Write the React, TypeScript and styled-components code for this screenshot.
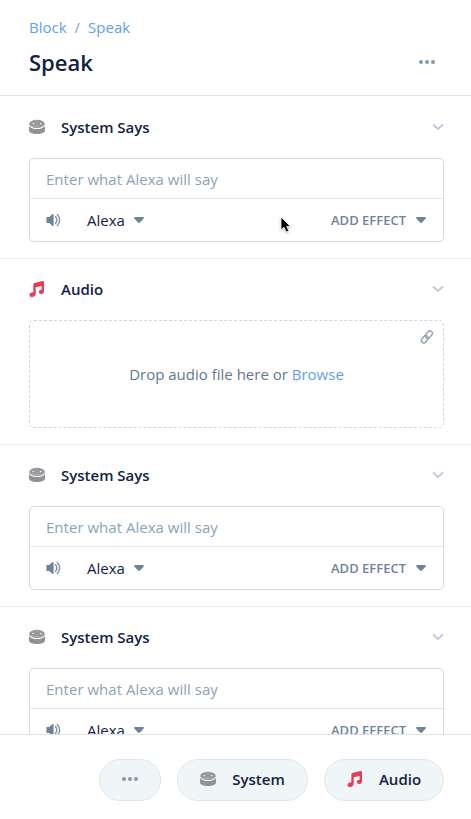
import React from "react";
import styled, { createGlobalStyle } from "styled-components";

const GlobalStyle = createGlobalStyle`
  *, *::before, *::after { box-sizing: border-box; }
  body { margin: 0; background: #fff; overflow: hidden; }
  button { font: inherit; color: inherit; }
`;

const Editor = styled.div`
  position: relative;
  display: flex;
  flex-direction: column;
  height: 819px;
  width: 100%;
  background: #fff;
  color: #132144;
  font-family: "Open Sans", sans-serif;
  font-size: 15px;
  line-height: 20px;
`;

const Header = styled.header`
  flex: none;
  height: 96px;
  padding: 17px 29px 0;
  border-bottom: 1px solid #dfe3e6;
`;

const Breadcrumb = styled.nav`
  display: flex;
  gap: 8px;
  color: #8da2b5;
`;

const Link = styled.a`
  color: #629fe6;
  text-decoration: none;
`;

const TitleRow = styled.div`
  display: flex;
  align-items: center;
  justify-content: space-between;
  height: 30px;
  margin-top: 10px;
  padding-right: 7px;
`;

const Title = styled.h1`
  margin: 0;
  font-size: 22px;
  line-height: 30px;
  font-weight: 600;
`;

const IconButton = styled.button`
  display: flex;
  padding: 0;
  border: 0;
  background: none;
`;

const Sections = styled.main`
  flex: 1;
  min-height: 0;
  padding-top: 1px;
  overflow: hidden;
`;

const Section = styled.section`
  padding: 20px 27px 16px 29px;
  border-bottom: 1px solid #e9ecee;
`;

const SectionHead = styled.div`
  display: flex;
  align-items: center;
  height: 20px;
  margin-bottom: 21px;
`;

const SectionTitle = styled.h2`
  flex: 1;
  margin: 0 0 0 16px;
  font-size: 15px;
  line-height: 20px;
  font-weight: 600;
`;

const SpeechBox = styled.div`
  height: 84px;
  border: 1px solid #d2dae2;
  border-radius: 5px;
  box-shadow: 0 0 2px rgba(17, 49, 96, 0.06);
`;

const Prompt = styled.div`
  height: 39px;
  padding: 10px 16px 0;
  color: #8da2b5;
  letter-spacing: 0.02px;
`;

const Toolbar = styled.div`
  display: flex;
  align-items: center;
  height: 43px;
  padding: 0 17px 1px 16px;
  border-top: 1px solid #e5e9ec;
`;

const Picker = styled.button<{ $effect?: boolean }>`
  display: flex;
  align-items: center;
  gap: ${(p) => (p.$effect ? 10 : 9)}px;
  margin-left: ${(p) => (p.$effect ? "auto" : "25px")};
  padding: 0;
  border: 0;
  background: none;
  color: ${(p) => (p.$effect ? "#6e849a" : "#132144")};
  font-size: ${(p) => (p.$effect ? 13 : 15)}px;
  font-weight: ${(p) => (p.$effect ? 600 : 400)};
  line-height: 20px;
`;

const DropZone = styled.div`
  position: relative;
  display: flex;
  align-items: center;
  justify-content: center;
  height: 108px;
  border: 1px dashed #d2d6d9;
  border-radius: 5px;
  color: #62778c;
  white-space: pre;
`;

const LinkBadge = styled.span`
  position: absolute;
  top: 9px;
  right: 9px;
  display: flex;
`;

const Footer = styled.footer`
  flex: none;
  display: flex;
  justify-content: flex-end;
  gap: 16px;
  height: 85px;
  padding: 24px 27px 0;
  border-top: 1px solid #dfe3e6;
  background: #fff;
`;

const Pill = styled.button<{ $width: number }>`
  display: flex;
  align-items: center;
  justify-content: center;
  gap: 16px;
  width: ${(p) => p.$width}px;
  height: 42px;
  padding: 0 0 2px;
  border: 1px solid #dfe5ed;
  border-radius: 21px;
  background: #f0f6f8;
  font-weight: 600;
`;

const Pointer = styled.svg`
  position: absolute;
  left: 280px;
  top: 216px;
  filter: drop-shadow(0 1px 1px rgba(0, 0, 0, 0.25));
`;

const Dots = () => (
  <svg width="16" height="4" viewBox="0 0 16 4" fill="#8299ae">
    <circle cx="2" cy="2" r="2" />
    <circle cx="8" cy="2" r="2" />
    <circle cx="14" cy="2" r="2" />
  </svg>
);

const SpeakerPuck = () => (
  <svg width="16" height="16" viewBox="0 0 16 16">
    <path d="M0 7C1.3 9.1 4.3 10.1 8 10.1S14.7 9.1 16 7V11.5C16 13.5 12.6 15 8 15S0 13.5 0 11.5Z" fill="#919295" />
    <ellipse cx="8" cy="4.9" rx="7.8" ry="4.2" fill="#97989b" />
    <path d="M2.3 6.1C4 8.1 12 8.1 13.7 6.1" fill="none" stroke="#b9babd" strokeWidth=".6" />
    <ellipse cx="4.3" cy="4.6" rx=".9" ry=".6" fill="#fff" />
    <ellipse cx="11.7" cy="4.6" rx=".9" ry=".6" fill="#fff" />
    <path d="M6.5 2.1H9.5M7 6.1H9" stroke="#b9babd" strokeWidth=".5" />
  </svg>
);

const Note = () => (
  <svg width="16" height="16" viewBox="0 0 16 16" fill="#e2405a">
    <path d="M4.3 3.4Q4.4 2.3 5.4 2L13.4 .1Q15 -.2 15 1.2V10.3C15 12.1 14 13.1 12.3 13.1C10.8 13.1 9.8 12.3 9.8 11.1C9.8 9.5 11.1 8.8 12.6 8.8V5L6.7 6.3V12.8C6.7 14.8 5.1 16 3.2 16H2.5C1.2 16 .5 15.2 .5 14C.5 12.2 2 11.2 4.3 11.3Z" />
  </svg>
);

const Chevron = () => (
  <svg width="12" height="8" viewBox="0 0 12 8">
    <path d="M1 1.5L6 6L11 1.5" fill="none" stroke="#bdcbd9" strokeWidth="1.9" />
  </svg>
);

const Caret = () => (
  <svg width="10" height="6" viewBox="0 0 10 6" fill="#6e849a">
    <path d="M1 0H9Q10 .1 9.8 1.1Q9.7 1.5 9.3 2L6 5.5Q5 6.4 4 5.5L.7 2Q.3 1.5.2 1.1Q0 .1 1 0Z" />
  </svg>
);

const Volume = () => (
  <svg width="16" height="14" viewBox="0 0 16 14">
    <path d="M1 4Q.4 4 .4 4.6V9.3Q.4 10 1 10H3.2L6.2 12.7Q7.6 13.5 7.6 12V2Q7.6.5 6.2 1.3L3.2 4Z" fill="#6e849a" />
    <path d="M9.5 3.5Q12.1 7 9.5 10.5M11.3 1.5Q15.9 7 11.3 12.5" fill="none" stroke="#8195a9" strokeWidth="1.4" strokeLinecap="round" />
  </svg>
);

const Chain = () => (
  <svg width="14" height="14" viewBox="0 0 14 14" fill="none" stroke="#8da0b0" strokeWidth="1.35">
    <rect x="-2.5" y="-4" width="5" height="8" rx="2.5" transform="translate(8.9 4.6) rotate(40)" />
    <rect x="-2.5" y="-4" width="5" height="8" rx="2.5" transform="translate(4.8 9.3) rotate(40)" />
  </svg>
);

const SystemSection = () => (
  <Section>
    <SectionHead>
      <SpeakerPuck />
      <SectionTitle>System Says</SectionTitle>
      <Chevron />
    </SectionHead>
    <SpeechBox>
      <Prompt>Enter what Alexa will say</Prompt>
      <Toolbar>
        <Volume />
        <Picker>Alexa<Caret /></Picker>
        <Picker $effect>ADD EFFECT<Caret /></Picker>
      </Toolbar>
    </SpeechBox>
  </Section>
);

const AudioSection = () => (
  <Section>
    <SectionHead>
      <Note />
      <SectionTitle>Audio</SectionTitle>
      <Chevron />
    </SectionHead>
    <DropZone>
      Drop audio file here or <Link>Browse</Link>
      <LinkBadge><Chain /></LinkBadge>
    </DropZone>
  </Section>
);

export default function App() {
  return (
    <>
      <GlobalStyle />
      <Editor>
        <Header>
          <Breadcrumb><Link>Block</Link><span>/</span><Link>Speak</Link></Breadcrumb>
          <TitleRow>
            <Title>Speak</Title>
            <IconButton aria-label="More options"><Dots /></IconButton>
          </TitleRow>
        </Header>
        <Sections>
          <SystemSection />
          <AudioSection />
          <SystemSection />
          <SystemSection />
        </Sections>
        <Footer>
          <Pill $width={62} aria-label="More blocks"><Dots /></Pill>
          <Pill $width={131}><SpeakerPuck />System</Pill>
          <Pill $width={120}><Note />Audio</Pill>
        </Footer>
        <Pointer width="12" height="18" viewBox="0 0 12 18">
          <path d="M1 1V14L4 11.2L6.2 16L8.8 14.8L6.7 10.4H10.5Z" fill="#000" stroke="#fff" strokeWidth=".8" />
        </Pointer>
      </Editor>
    </>
  );
}
